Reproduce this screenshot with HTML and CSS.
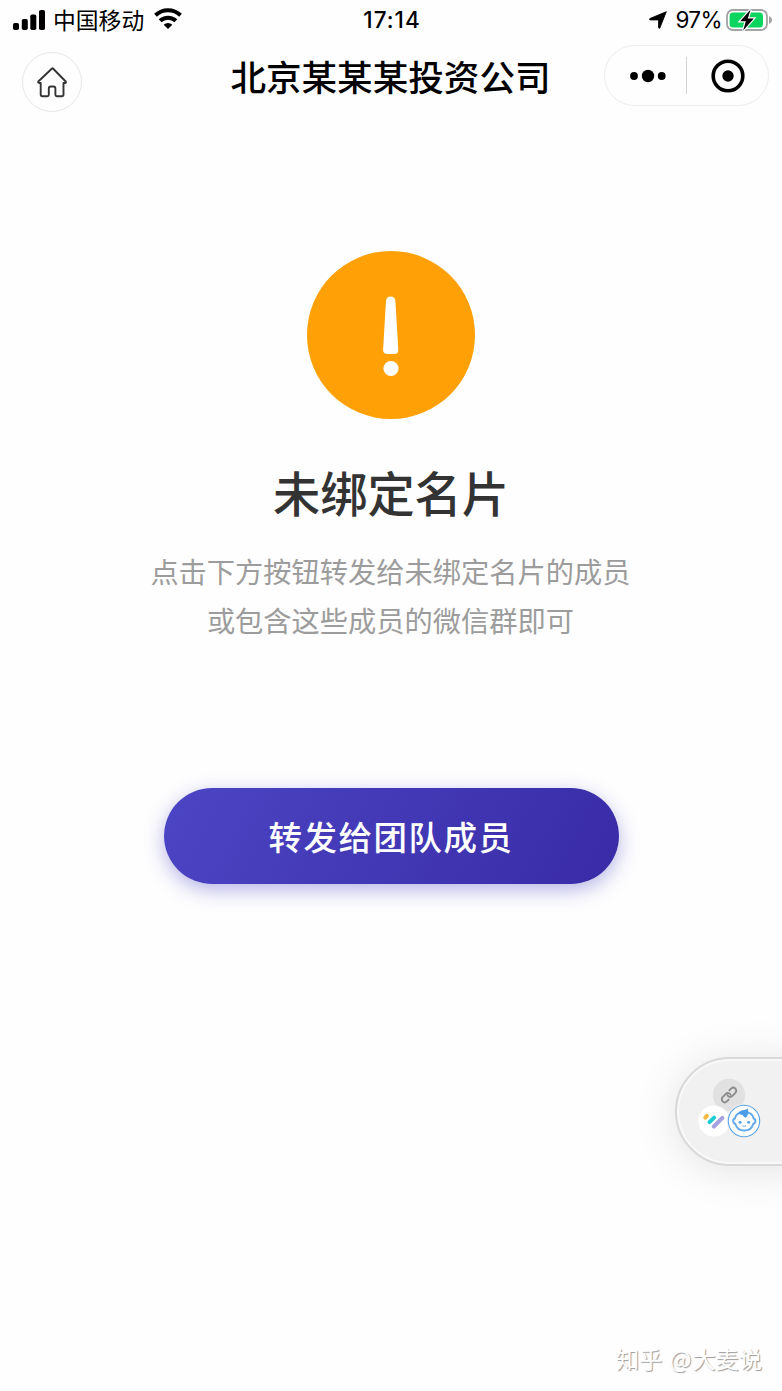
FILE: index.html
```
<!DOCTYPE html>
<html lang="zh-CN">
<head>
<meta charset="utf-8">
<title>未绑定名片</title>
<link rel="stylesheet" href="styles.css">
</head>
<body>
<div class="screen">
  <header class="status">
    <div class="status-left">
      <svg class="signal" width="32" height="20" viewBox="0 0 32 20"><rect x="0" y="13" width="6" height="7" rx="1.8"/><rect x="8.8" y="9" width="6" height="11" rx="1.8"/><rect x="17.3" y="4.5" width="6" height="15.5" rx="1.8"/><rect x="26" y="0" width="6" height="20" rx="1.8"/></svg>
      <span class="carrier">中国移动</span>
      <svg class="wifi" width="28" height="21" viewBox="0 0 28 21"><path d="M1.5 7.3a18 18 0 0 1 25 0M6.1 12.8a11.5 11.5 0 0 1 15.800 0" fill="none" stroke="#000" stroke-width="4"/><path d="M14 21l-4.300-4.300a6.500 6.500 0 0 1 8.600 0z"/></svg>
    </div>
    <div class="time">17:14</div>
    <div class="status-right">
      <svg class="arrow" width="18" height="18" viewBox="0 0 18 18"><path d="M17.300.7L10.800 17q-.8 1-1.200-.4V8.900H1.200q-1.700-.4-.2-1.400z" stroke="#000" stroke-width=".9" stroke-linejoin="round"/></svg>
      <span class="percent">97%</span>
      <svg class="battery" width="47" height="24" viewBox="0 0 47 24"><rect x="1" y="2" width="40" height="20" rx="6" fill="#fff" stroke="#a3a3a3" stroke-width="1.8"/><rect x="3.6" y="4.6" width="33.4" height="14.800" rx="3.5" fill="#0bd45f"/><path d="M43 8.200q3 1 3 3.800t-3 3.800z" fill="#a3a3a3"/><path d="M24.600 1.600L14.200 13.200h5.600l-2.600 9.200 10.600-12h-6z" stroke="#fff" stroke-width="2.400" paint-order="stroke"/></svg>
    </div>
  </header>
  <nav class="nav">
    <div class="home"><svg width="32" height="32" viewBox="0 0 32 32"><path d="M16 2.500L2.300 15.500q-.6 1.400 1 1.500h1.400v11.500q0 1.800 1.800 1.800h4.800q1.500 0 1.500-1.500v-6.300q0-2 2-2h2.600q2 0 2 2v6.300q0 1.500 1.500 1.500h4.800q1.800 0 1.800-1.800V17h1.400q1.500-.2.800-1.500L17 2.500q-.5-.5-1 0z" fill="none" stroke="#333" stroke-width="1.900" stroke-linejoin="round"/></svg></div>
    <h1 class="title">北京某某某投资公司</h1>
    <div class="capsule">
      <svg width="36" height="14" viewBox="0 0 36 14"><circle cx="4" cy="7" r="3.900"/><circle cx="18" cy="7" r="6.200"/><circle cx="31.700" cy="7" r="3.900"/></svg>
      <i class="divider"></i>
      <svg width="34" height="34" viewBox="0 0 34 34"><circle cx="17" cy="17" r="14.800" fill="none" stroke="#000" stroke-width="3.600"/><circle cx="17" cy="17" r="5.700"/></svg>
    </div>
  </nav>
  <main class="content">
    <svg class="warning" width="168" height="168" viewBox="0 0 168 168"><circle cx="84" cy="84" r="84" fill="#fea006"/><path d="M79 50q.4-4.500 4.700-4.500t4.700 4.500l2.900 48.500q.2 4.500-4 4.500h-7q-4.400 0-4.200-4.500z" fill="#fff"/><circle cx="84" cy="117.500" r="7.600" fill="#fff"/></svg>
    <h2 class="heading">未绑定名片</h2>
    <p class="desc">点击下方按钮转发给未绑定名片的成员<br>或包含这些成员的微信群即可</p>
    <button class="share">转发给团队成员</button>
  </main>
  <footer class="watermark">知乎 <span class="at">@</span>大麦说</footer>
  <aside class="float">
    <svg width="64" height="60" viewBox="0 0 64 60">
      <circle cx="31" cy="17" r="16.200" fill="#e1e1e1"/>
      <g transform="translate(31 17) rotate(-45)" fill="none" stroke="#8c8c8c" stroke-width="1.900" stroke-linecap="round"><path d="M-3.500 3H-6a3 3 0 0 1 0-6h4.500a3 3 0 0 1 2.800 4"/><path d="M3.500-3H6a3 3 0 0 1 0 6H1.500a3 3 0 0 1-2.800-4"/></g>
      <circle cx="16" cy="43" r="15.600" fill="#fff"/>
      <g stroke-width="4" stroke-linecap="round"><path d="M7.300 39.600l1.600-1.700" stroke="#f5b840"/><path d="M11.500 44.200l4.600-4.600" stroke="#20cbd5"/><path d="M15.800 48.500l8.600-8.600" stroke="#a5a0df"/></g>
      <circle cx="46" cy="43" r="17.300" fill="#f1f1f1"/>
      <circle cx="46" cy="43" r="15.700" fill="#fff" stroke="#5ca6e7" stroke-width="1.100"/>
      <path d="M46.300 34q8.200.3 9.400 6.500 2 .5 1.700 3-.3 2-2.200 2.500-1.600 6.500-8.900 6.500t-8.900-6.500q-1.900-.5-2.200-2.500-.3-2.500 1.700-3 1.200-6.200 9.400-6.500z" fill="#fff" stroke="#62aae9" stroke-width="1.900"/>
      <path d="M40.300 35.300q1.700-3 5.700-3.400 2.500 0 3.800-1.400.9 1.700.1 3 .8 4-2.200 6.200-2.200-.7-3.100-2.800-2.500.1-4.300-1.600z" fill="#4c9de6"/>
      <circle cx="42" cy="44.200" r="1.500" fill="#5ca6e7"/><circle cx="50.600" cy="44.200" r="1.500" fill="#5ca6e7"/><path d="M44.600 47.800q1.700 1 3.400 0" fill="none" stroke="#5ca6e7"/>
    </svg>
  </aside>
</div>
</body>
</html>
```
FILE: styles.css
```
* { box-sizing: border-box; }
body { margin: 0; background: #fefefe; font-family: Inter, "Noto Sans CJK SC", sans-serif; color: #000; }
svg { display: block; flex: none; }
h1, h2, p { margin: 0; }
.screen { position: relative; width: 782px; height: 1391px; overflow: hidden; display: flex; flex-direction: column; }
.status { height: 40px; display: grid; grid-template-columns: 1fr auto 1fr; align-items: center; padding: 0 9px 0 13px; }
.status-left, .status-right { display: flex; align-items: center; }
.status-right { justify-content: flex-end; }
.carrier { font: 22.800px/38px "Noto Sans CJK SC", sans-serif; margin: 0 10px 0 8px; }
.wifi { margin-bottom: 3px; }
.time { font-size: 22.500px; font-weight: 500; letter-spacing: 1px; margin: 0 2px 1px 0; }
.percent { font-size: 22.500px; letter-spacing: -.6px; margin: 0 4px 1px 9px; }
.status-right .arrow { margin-right: -1px; }
.nav { height: 72px; display: grid; grid-template-columns: 1fr auto 1fr; padding: 5px 13px 0 22px; align-items: start; }
.home { width: 60px; height: 60px; margin-top: 7px; border: 1.500px solid #e7e7e7; border-radius: 50%; display: flex; align-items: center; justify-content: center; }
.title { font: 500 35.600px/60px "Noto Sans CJK SC", sans-serif; margin: 1px 10px 0 0; }
.capsule { justify-self: end; width: 165px; height: 61px; border: 1px solid #ededed; border-radius: 31px; display: flex; align-items: center; padding-left: 25px; }
.divider { width: 1px; height: 37px; background: #d5d5d5; margin: 0 24px 0 20px; }
.content { display: flex; flex-direction: column; align-items: center; padding-top: 138px; }
.heading { font: 500 47.200px/70px "Noto Sans CJK SC", sans-serif; color: #333; margin-top: 38px; }
.warning { margin-top: 1px; }
.desc { font: 400 28.250px/49px "Noto Sans CJK SC", sans-serif; color: #9c9c9c; text-align: center; margin-top: 19px; margin-right: 1px; }
.share { width: 455px; height: 96px; margin-top: 144px; padding: 0; border: 0; border-radius: 48px; background: linear-gradient(118deg, #4c45c4, #392ba6); box-shadow: 0 6px 20px rgba(76, 69, 196, .4); color: #fff; font: 500 33.500px/96px "Noto Sans CJK SC", sans-serif; letter-spacing: 1.500px; }
.watermark { margin-top: auto; padding: 0 20px 16px 0; text-align: right; font: 400 23.200px/34px "Noto Sans CJK SC", sans-serif; word-spacing: 2px; color: #fff; text-shadow: 1px 1px 1px #999; }
.at { letter-spacing: 1px; }
.float { position: absolute; left: 675px; top: 1057px; width: 170px; height: 109px; border: 2px solid #d9d9d9; border-radius: 55px; background: #f1f1f1; box-shadow: inset 0 0 0 2px #f9f9f9, 0 4px 45px rgba(0, 0, 0, .11); padding: 19px 0 0 21px; }
```
